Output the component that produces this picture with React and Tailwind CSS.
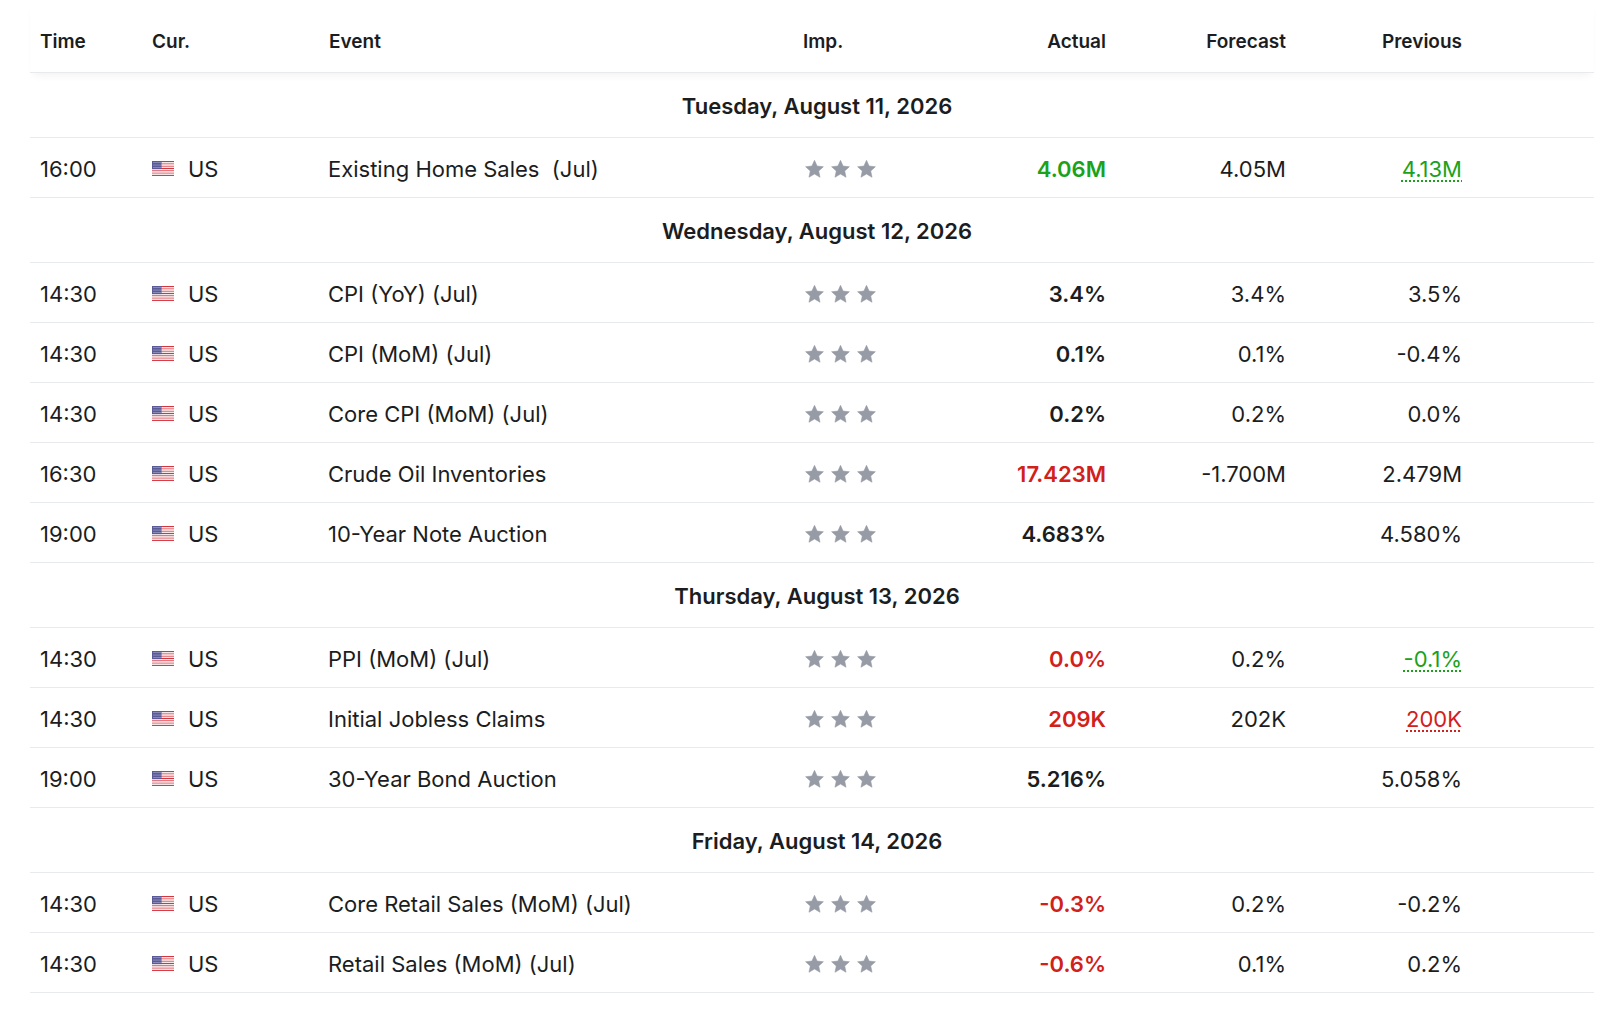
import React from 'react';

const GREEN = 'text-[#1ba21a]';
const RED = 'text-[#d2201a]';

const days = [
  {
    date: 'Tuesday, August 11, 2026',
    rows: [
      { time: '16:00', event: 'Existing Home Sales\u00a0\u00a0(Jul)', actual: '4.06M', actualTone: 'green', forecast: '4.05M', previous: '4.13M', prevTone: 'green' },
    ],
  },
  {
    date: 'Wednesday, August 12, 2026',
    rows: [
      { time: '14:30', event: 'CPI (YoY) (Jul)', actual: '3.4%', forecast: '3.4%', previous: '3.5%' },
      { time: '14:30', event: 'CPI (MoM) (Jul)', actual: '0.1%', forecast: '0.1%', previous: '-0.4%' },
      { time: '14:30', event: 'Core CPI (MoM) (Jul)', actual: '0.2%', forecast: '0.2%', previous: '0.0%' },
      { time: '16:30', event: 'Crude Oil Inventories', actual: '17.423M', actualTone: 'red', forecast: '-1.700M', previous: '2.479M' },
      { time: '19:00', event: '10-Year Note Auction', actual: '4.683%', forecast: '', previous: '4.580%' },
    ],
  },
  {
    date: 'Thursday, August 13, 2026',
    rows: [
      { time: '14:30', event: 'PPI (MoM) (Jul)', actual: '0.0%', actualTone: 'red', forecast: '0.2%', previous: '-0.1%', prevTone: 'green' },
      { time: '14:30', event: 'Initial Jobless Claims', actual: '209K', actualTone: 'red', forecast: '202K', previous: '200K', prevTone: 'red' },
      { time: '19:00', event: '30-Year Bond Auction', actual: '5.216%', forecast: '', previous: '5.058%' },
    ],
  },
  {
    date: 'Friday, August 14, 2026',
    rows: [
      { time: '14:30', event: 'Core Retail Sales (MoM) (Jul)', actual: '-0.3%', actualTone: 'red', forecast: '0.2%', previous: '-0.2%' },
      { time: '14:30', event: 'Retail Sales (MoM) (Jul)', actual: '-0.6%', actualTone: 'red', forecast: '0.1%', previous: '0.2%' },
    ],
  },
];

const cols = 'grid grid-cols-[112px_177px_476px_201px_124px_181px_171px_1fr]';

const UsFlag = () => (
  <svg width="22" height="16" viewBox="0 0 22 16" className="shrink-0">
    {[0, 1, 2, 3, 4, 5, 6].map((i) => (
      <rect key={i} x="0" y={i * 2.3} width="22" height="1.15" fill="#d4363f" />
    ))}
    {[0, 1, 2, 3, 4, 5].map((i) => (
      <rect key={'w' + i} x="0" y={i * 2.3 + 1.15} width="22" height="1.15" fill="#f6e6e8" />
    ))}
    <rect x="0" y="0" width="9.5" height="8.1" fill="#5a5b96" />
    {[1.5, 3.5, 5.5, 7.5].map((x) =>
      [1.5, 4, 6.5].map((y) => <circle key={x + '-' + y} cx={x + 0.5} cy={y} r="0.5" fill="#d8d9ee" />)
    )}
  </svg>
);

const Star = () => (
  <svg width="19" height="18" viewBox="0 0 20 19" fill="#969ba6">
    <path d="M10 0.3l2.75 6.1 6.65 0.7-4.95 4.5 1.4 6.6L10 14.8l-5.85 3.4 1.4-6.6L0.6 7.1l6.65-0.7z" strokeLinejoin="round" stroke="#969ba6" strokeWidth="0.6" />
  </svg>
);

const toneClass = (tone) => (tone === 'green' ? GREEN : tone === 'red' ? RED : 'text-[#1b1d21]');

export default function App() {
  return (
    <div className="min-h-screen bg-white px-[30px] font-['Inter',sans-serif] text-[#1b1d21]">
      <div className={`${cols} h-[73px] items-center border-b border-[#e9eaee] pt-[13px] shadow-[0_6px_8px_-4px_rgba(0,0,0,0.06)] text-[19px] font-semibold`}>
        <div className="pl-[10px]">Time</div>
        <div className="pl-[10px]">Cur.</div>
        <div className="pl-[10px]">Event</div>
        <div className="pl-[8px]">Imp.</div>
        <div className="pr-[14px] text-right">Actual</div>
        <div className="pr-[15px] text-right">Forecast</div>
        <div className="pr-[10px] text-right">Previous</div>
        <div />
      </div>

      {days.map((day) => (
        <div key={day.date}>
          <div className="flex h-[65px] items-center justify-center border-b border-[#e9eaee] pt-[2px] pl-[10px] text-[22px] font-semibold">
            {day.date}
          </div>
          {day.rows.map((r, i) => (
            <div key={i} className={`${cols} h-[60px] items-center border-b border-[#e9eaee] pt-[3px] text-[22px]`}>
              <div className="pl-[10px]">{r.time}</div>
              <div className="flex items-center gap-[14px] pl-[10px]">
                <UsFlag />
                <span>US</span>
              </div>
              <div className="pl-[9px]">{r.event}</div>
              <div className="flex items-center gap-[7px] pl-[10px]">
                <Star />
                <Star />
                <Star />
              </div>
              <div className={`pr-[14px] text-right font-semibold ${toneClass(r.actualTone)}`}>{r.actual}</div>
              <div className="pr-[15px] text-right">{r.forecast}</div>
              <div className="pr-[10px] text-right">
                <span
                  className={
                    r.prevTone
                      ? `${toneClass(r.prevTone)} underline decoration-dotted decoration-2 underline-offset-4`
                      : ''
                  }
                >
                  {r.previous}
                </span>
              </div>
              <div />
            </div>
          ))}
        </div>
      ))}
    </div>
  );
}
